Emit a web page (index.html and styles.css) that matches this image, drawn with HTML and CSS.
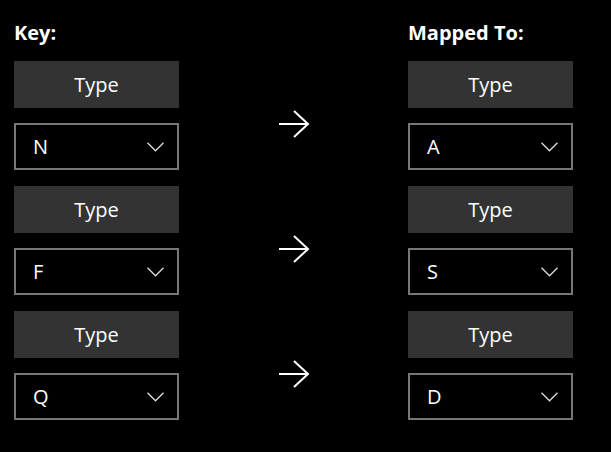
FILE: index.html
```html
<!DOCTYPE html>
<html lang="en">
<head>
    <meta charset="UTF-8">
    <title>Key Mapping</title>
    <link rel="stylesheet" href="styles.css">
</head>
<body>
    <div class="mapper">
        <div class="header">
            <div class="title">Key:</div>
            <div class="title">Mapped To:</div>
        </div>

        <div class="row">
            <div class="side">
                <button class="type-btn">Type</button>
                <div class="select"><span>N</span><svg class="chev" width="17" height="10" viewBox="0 0 17 10"><polyline points="0.5,0.8 8.5,8.8 16.5,0.8"/></svg></div>
            </div>
            <div class="arrow"><svg width="32" height="28" viewBox="0 0 32 28"><path d="M1 14 H30 M16 1 L30 14 L16 27"/></svg></div>
            <div class="side">
                <button class="type-btn">Type</button>
                <div class="select"><span>A</span><svg class="chev" width="17" height="10" viewBox="0 0 17 10"><polyline points="0.5,0.8 8.5,8.8 16.5,0.8"/></svg></div>
            </div>
        </div>

        <div class="row">
            <div class="side">
                <button class="type-btn">Type</button>
                <div class="select"><span>F</span><svg class="chev" width="17" height="10" viewBox="0 0 17 10"><polyline points="0.5,0.8 8.5,8.8 16.5,0.8"/></svg></div>
            </div>
            <div class="arrow"><svg width="32" height="28" viewBox="0 0 32 28"><path d="M1 14 H30 M16 1 L30 14 L16 27"/></svg></div>
            <div class="side">
                <button class="type-btn">Type</button>
                <div class="select"><span>S</span><svg class="chev" width="17" height="10" viewBox="0 0 17 10"><polyline points="0.5,0.8 8.5,8.8 16.5,0.8"/></svg></div>
            </div>
        </div>

        <div class="row">
            <div class="side">
                <button class="type-btn">Type</button>
                <div class="select"><span>Q</span><svg class="chev" width="17" height="10" viewBox="0 0 17 10"><polyline points="0.5,0.8 8.5,8.8 16.5,0.8"/></svg></div>
            </div>
            <div class="arrow"><svg width="32" height="28" viewBox="0 0 32 28"><path d="M1 14 H30 M16 1 L30 14 L16 27"/></svg></div>
            <div class="side">
                <button class="type-btn">Type</button>
                <div class="select"><span>D</span><svg class="chev" width="17" height="10" viewBox="0 0 17 10"><polyline points="0.5,0.8 8.5,8.8 16.5,0.8"/></svg></div>
            </div>
        </div>
    </div>
</body>
</html>
```

FILE: styles.css
```css
body {
    margin: 0;
    background-color: #000;
    color: #fff;
    font-family: 'Open Sans', 'Noto Sans', sans-serif;
}
.mapper {
    width: 559px;
    padding: 20px 0 0 14px;
    display: flex;
    flex-direction: column;
    gap: 16px;
}
.header {
    display: flex;
    justify-content: space-between;
    width: 559px;
    height: 25px;
}
.header .title {
    width: 165px;
    font-size: 20px;
    font-weight: bold;
    line-height: 25px;
}
.row {
    display: flex;
    align-items: center;
}
.side {
    width: 165px;
    display: flex;
    flex-direction: column;
    gap: 15px;
}
.arrow {
    flex: 1;
    display: flex;
    justify-content: center;
    margin-top: 16px;
}
.arrow svg path {
    fill: none;
    stroke: #fff;
    stroke-width: 2;
}
.type-btn {
    height: 47px;
    border: none;
    background-color: #333;
    color: #fff;
    font-family: inherit;
    font-size: 20px;
    padding: 0;
}
.select {
    height: 47px;
    box-sizing: border-box;
    border: 2px solid #777;
    display: flex;
    align-items: center;
    justify-content: space-between;
    padding: 0 13px 0 17px;
    font-size: 20px;
}
.chev polyline {
    fill: none;
    stroke: #ddd;
    stroke-width: 1.3;
}
```
